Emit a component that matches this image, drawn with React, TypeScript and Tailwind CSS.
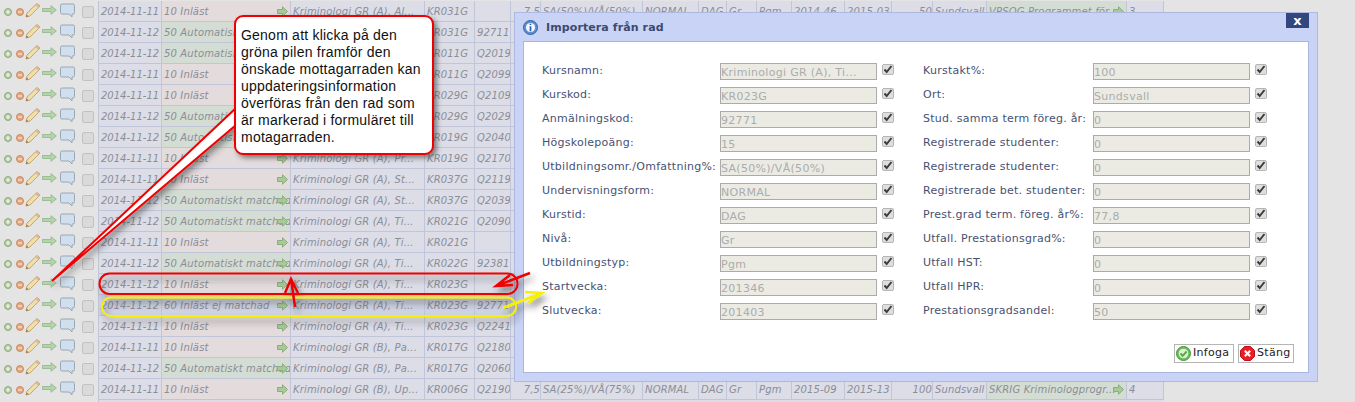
const rows = [
  ['2014-11-11', 'r', 'Kriminologi GR (A), Al...', 'KR031G', ''],
  ['2014-11-12', 'g', '', 'KR031G', '92711'],
  ['2014-11-12', 'g', '', 'KR011G', 'Q2019'],
  ['2014-11-11', 'r', '', 'KR011G', 'Q2099'],
  ['2014-11-11', 'r', '', 'KR029G', 'Q2109'],
  ['2014-11-12', 'g', '', 'KR029G', 'Q2029'],
  ['2014-11-12', 'g', '', 'KR019G', 'Q2040'],
  ['2014-11-11', 'r', 'Kriminologi GR (A), Pr...', 'KR019G', 'Q2170'],
  ['2014-11-11', 'r', 'Kriminologi GR (A), St...', 'KR037G', 'Q2119'],
  ['2014-11-12', 'g', 'Kriminologi GR (A), St...', 'KR037G', 'Q2039'],
  ['2014-11-12', 'g', 'Kriminologi GR (A), Ti...', 'KR021G', 'Q2090'],
  ['2014-11-11', 'r', 'Kriminologi GR (A), Ti...', 'KR021G', ''],
  ['2014-11-12', 'g', 'Kriminologi GR (A), Ti...', 'KR022G', '92381'],
  ['2014-11-12', 'r', 'Kriminologi GR (A), Ti...', 'KR023G', ''],
  ['2014-11-12', 'b', 'Kriminologi GR (A), Ti...', 'KR023G', '92771'],
  ['2014-11-11', 'r', 'Kriminologi GR (A), Ti...', 'KR023G', 'Q2241'],
  ['2014-11-11', 'r', 'Kriminologi GR (B), Pa...', 'KR017G', 'Q2180'],
  ['2014-11-12', 'g', 'Kriminologi GR (B), Pa...', 'KR017G', 'Q2060'],
  ['2014-11-11', 'r', 'Kriminologi GR (B), Up...', 'KR006G', 'Q2190'],
];

const leftFields = [
  ['Kursnamn:', 'Kriminologi GR (A), Ti...'],
  ['Kurskod:', 'KR023G'],
  ['Anmälningskod:', '92771'],
  ['Högskolepoäng:', '15'],
  ['Utbildningsomr./Omfattning%:', 'SA(50%)/VÅ(50%)'],
  ['Undervisningsform:', 'NORMAL'],
  ['Kurstid:', 'DAG'],
  ['Nivå:', 'Gr'],
  ['Utbildningstyp:', 'Pgm'],
  ['Startvecka:', '201346'],
  ['Slutvecka:', '201403'],
];

const rightFields = [
  ['Kurstakt%:', '100'],
  ['Ort:', 'Sundsvall'],
  ['Stud. samma term föreg. år:', '0'],
  ['Registrerade studenter:', '0'],
  ['Registrerade studenter:', '0'],
  ['Registrerade bet. studenter:', '0'],
  ['Prest.grad term. föreg. år%:', '77,8'],
  ['Utfall. Prestationsgrad%:', '0'],
  ['Utfall HST:', '0'],
  ['Utfall HPR:', '0'],
  ['Prestationsgradsandel:', '50'],
];

const gridCols = 'grid-cols-[63px_129px_134px_50px_36px_30px_102px_56px_28px_30px_35px_53px_47px_41px_54px_140px_37px]';

function RowIcons() {
  return (
    <div className="relative flex h-full w-[98px] shrink-0 items-center bg-[#e4e4e4] pl-[4px]">
      <svg width="8" height="8" viewBox="0 0 8 8" className="mr-[4px] shrink-0">
        <circle cx="4" cy="4" r="3.500" fill="#b4cba6" stroke="#8fab7f" />
        <path d="M2 4h4M4 2v4" stroke="#f2f6ee" strokeWidth="1.100" />
      </svg>
      <svg width="8" height="8" viewBox="0 0 8 8" className="mr-[1px] shrink-0">
        <circle cx="4" cy="4" r="3.500" fill="#e3a67e" stroke="#cd8d5f" />
        <path d="M2 4h4" stroke="#f8efe7" strokeWidth="1.100" />
      </svg>
      <svg width="16" height="16" viewBox="0 0 16 16" className="mb-[3px] shrink-0">
        <path d="M1 15l1-4L12 1.500l3 2.500L5 14z" fill="#efdfa8" stroke="#c4a478" />
        <path d="M11 2.500l3 2.600" stroke="#dcb49c" strokeWidth="2" />
        <path d="M1 15l.6-2.400 1.800 1.600z" fill="#8b7158" />
      </svg>
      <svg width="15" height="10" viewBox="0 0 15 10" className="mb-[3px] ml-[1px] shrink-0">
        <path d="M0.500 3.500h8.500V0.700L14.300 5 9 9.300V6.500H0.500z" fill="#b4d4aa" stroke="#9cbd96" />
      </svg>
      <svg width="15" height="15" viewBox="0 0 15 15" className="mb-[2px] ml-[3px] shrink-0">
        <path d="M2 1h11q1.500 0 1.500 1.500v7q0 1.500-1.500 1.500h-1v3l-3-3H2Q.5 11 .5 9.500v-7Q.5 1 2 1z" fill="#cfdfee" stroke="#9aa6b4" />
      </svg>
      <span className="ml-[7px] h-[12px] w-[12px] shrink-0 rounded-[2px] border border-[#c2c2c2] bg-[#dadada]" />
    </div>
  );
}

function CellArrow() {
  return (
    <svg width="11" height="11" viewBox="0 0 11 11" className="absolute right-[2px] top-[5px]">
      <path d="M.5 3.500h5V.8L10.500 5.500 5.500 10.200V7.500h-5z" fill="#a6cb96" stroke="#8cad80" />
    </svg>
  );
}

function Cell({ children, className = '' }: { children?: React.ReactNode; className?: string }) {
  return (
    <div className={`relative overflow-hidden whitespace-nowrap border-r border-[#c0c5da] pl-[2px] leading-[21px] ${className}`}>
      {children}
    </div>
  );
}

function TableRow({ row, index }: { row: string[]; index: number }) {
  const [date, state, name, code, anm] = row;
  const status = state === 'g' ? '50 Automatiskt matchad' : state === 'b' ? '60 Inläst ej matchad' : '10 Inläst';
  const statusBg = state === 'g' ? 'bg-[#d4ddd3]' : state === 'b' ? 'bg-[#cfd3e2]' : 'bg-[#e3dbdc]';
  const cellBg = state === 'b' ? 'bg-[#cfd3e2]' : 'bg-[#dcdde6]';
  const first = index === 0;
  const last = index === 18;
  const visible = first || last;
  return (
    <div className="flex h-[21px] w-[1164px]">
      <RowIcons />
      <div className={`grid flex-1 ${gridCols} border-b border-l border-[#c0c5da] text-[10px] italic tracking-[0.15px] text-[#8b8d99] ${cellBg}`}>
        <Cell className="tracking-normal">{date}</Cell>
        <Cell className={statusBg}>
          {status}
          <CellArrow />
        </Cell>
        <Cell>{name}</Cell>
        <Cell>{code}</Cell>
        <Cell>{anm}</Cell>
        <Cell className="text-right">{visible && '7,5'}</Cell>
        <Cell>{first ? 'SA(50%)/VÅ(50%)' : last ? 'SA(25%)/VÅ(75%)' : ''}</Cell>
        <Cell>{visible && 'NORMAL'}</Cell>
        <Cell>{visible && 'DAG'}</Cell>
        <Cell>{visible && 'Gr'}</Cell>
        <Cell>{visible && 'Pgm'}</Cell>
        <Cell>{first ? '2014-46' : last ? '2015-09' : ''}</Cell>
        <Cell>{first ? '2015-03' : last ? '2015-13' : ''}</Cell>
        <Cell className="text-right">{first ? '50' : last ? '100' : ''}</Cell>
        <Cell>{visible && 'Sundsvall'}</Cell>
        <Cell className="bg-[#d4ddd3]">
          {first ? 'VPSOG Programmet för' : last ? 'SKRIG Kriminologprogr...' : ''}
          <CellArrow />
        </Cell>
        <Cell>{first ? '3' : last ? '4' : ''}</Cell>
      </div>
    </div>
  );
}

function Field({ label, value, labelWidth }: { label: string; value: string; labelWidth: string }) {
  return (
    <div className="flex h-[24px] items-start">
      <label className={`${labelWidth} shrink-0 whitespace-nowrap text-[11px] leading-[15px] tracking-[0.25px] text-[#465172]`}>{label}</label>
      <div className="h-[17px] w-[157px] shrink-0 overflow-hidden whitespace-nowrap border border-[#ababab] bg-[#ebebe4] pt-[1px] text-[11px] leading-[15px] tracking-[0.3px] text-[#acacac]">
        {value}
      </div>
      <span className="ml-[5px] mt-[1px] flex h-[11px] w-[12px] items-center justify-center rounded-[2px] border border-[#b5b5b5] bg-[#dedede]">
        <svg width="10" height="9" viewBox="0 0 10 9">
          <path d="M1.500 4.500l2.200 2.500L8.500 1" fill="none" stroke="#3d3d3d" strokeWidth="2" />
        </svg>
      </span>
    </div>
  );
}

function Modal() {
  return (
    <div className="absolute left-[514px] top-[12px] flex h-[370px] w-[804px] flex-col border border-[#aeb9e2] bg-[#c9d3f5] px-[8px] pb-[8px] font-['DejaVu_Sans',sans-serif]">
      <div className="relative flex h-[28px] shrink-0 items-center">
        <svg width="15" height="15" viewBox="0 0 15 15">
          <circle cx="7.500" cy="7.500" r="7" fill="#5b8fd6" stroke="#3d5f9c" />
          <circle cx="7.500" cy="7.500" r="4.600" fill="#f4f7fd" />
          <path d="M7.500 3.800v1.200M7.500 6.200v5" stroke="#2f5da8" strokeWidth="1.700" />
        </svg>
        <span className="ml-[8px] text-[11px] font-bold leading-none tracking-[0.1px] text-[#3c4a70]">Importera från rad</span>
        <span className="absolute right-0 top-0 flex h-[15px] w-[23px] items-center justify-center bg-[#33477f] pb-[1px] text-[13px] font-bold leading-none text-white">x</span>
      </div>
      <div className="relative flex-1 border border-[#a9b5dd] bg-white pl-[18px] pt-[21px]">
        <div className="flex">
          <div className="w-[381px] shrink-0">
            {leftFields.map(f => <Field key={f[0]} label={f[0]} value={f[1]} labelWidth="w-[178px]" />)}
          </div>
          <div>
            {rightFields.map((f, i) => <Field key={i} label={f[0]} value={f[1]} labelWidth="w-[170px]" />)}
          </div>
        </div>
        <div className="absolute bottom-[9px] right-[14px] flex gap-[4px] text-[11px] tracking-[0.3px] text-[#222]">
          <button className="flex h-[19px] w-[60px] items-center gap-[2px] border border-[#b5b5b5] bg-white pl-[1px]">
            <svg width="15" height="15" viewBox="0 0 15 15">
              <circle cx="7.500" cy="7.500" r="7" fill="#6cbc5a" stroke="#46953a" />
              <circle cx="7.500" cy="7.500" r="4.800" fill="#dff0d9" />
              <path d="M4.500 7.500l2.200 2.300 3.900-4.300" fill="none" stroke="#59aa4a" strokeWidth="2" />
            </svg>
            Infoga
          </button>
          <button className="flex h-[19px] w-[56px] items-center gap-[2px] border border-[#b5b5b5] bg-white pl-[1px]">
            <svg width="15" height="15" viewBox="0 0 15 15">
              <path d="M4.500.5h6l4 4v6l-4 4h-6l-4-4v-6z" fill="#ee1c25" stroke="#b8141b" />
              <path d="M4.800 4.800l5.400 5.400M10.200 4.800l-5.400 5.400" stroke="#fff" strokeWidth="2.200" />
            </svg>
            Stäng
          </button>
        </div>
      </div>
    </div>
  );
}

function Callout() {
  return (
    <div className="absolute left-[234px] top-[15px] h-[140px] w-[200px] rounded-[9px] border-[2px] border-[#f00000] bg-white pl-[5px] pt-[10px] font-['Liberation_Sans',sans-serif] text-[14px] leading-[17px] tracking-[0.22px] text-[#111] shadow-[3px_3px_5px_rgba(60,60,60,0.6)]">
      Genom att klicka på den<br />
      gröna pilen framför den<br />
      önskade mottagarraden kan<br />
      uppdateringsinformation<br />
      överföras från den rad som<br />
      är markerad i formuläret till<br />
      motagarraden.
    </div>
  );
}

// pekare och markeringar ritade ovanpå tabellen
function Annotations() {
  return (
    <svg width="1355" height="402" className="pointer-events-none absolute left-0 top-0">
      <defs>
        <filter id="shade" x="-20%" y="-20%" width="140%" height="160%">
          <feDropShadow dx="3" dy="5" stdDeviation="3" floodColor="#333" floodOpacity="0.55" />
        </filter>
      </defs>
      <g filter="url(#shade)" fill="none">
        <rect x="99.500" y="273.500" width="418" height="20.500" rx="10" stroke="#f00000" strokeWidth="2" />
        <rect x="102" y="297.500" width="414" height="18.500" rx="9" stroke="#f7f000" strokeWidth="2" />
        <path d="M530 273L496 286M510 275L496 286L513 285" stroke="#f00000" strokeWidth="2.500" />
        <path d="M503 308L542 293M525 292L542 293L528 303" stroke="#f7f000" strokeWidth="2.500" />
        <path d="M295 307L291 279M285 293L291 279L298 293" stroke="#f00000" strokeWidth="2.500" />
      </g>
    </svg>
  );
}

function Pointer() {
  return (
    <svg width="1355" height="402" className="pointer-events-none absolute left-0 top-0">
      <defs>
        <filter id="shade2" x="-20%" y="-20%" width="140%" height="140%">
          <feDropShadow dx="3" dy="4" stdDeviation="3" floodColor="#333" floodOpacity="0.5" />
        </filter>
      </defs>
      <path d="M236 108L52 281L236 125" fill="#fff" stroke="#f00000" strokeWidth="2" filter="url(#shade2)" />
    </svg>
  );
}

export default function App() {
  return (
    <div className="relative h-[402px] w-[1355px] overflow-hidden bg-[#e4e4e4] font-['DejaVu_Sans',sans-serif]">
      <div className="flex flex-col pt-[1px]">
        {rows.map((row, i) => <TableRow key={i} row={row} index={i} />)}
        <div className="h-[21px] w-[1164px] pl-[98px]">
          <div className="h-full border-l border-[#c0c5da] bg-[#dcdde6]" />
        </div>
      </div>
      <Pointer />
      <Modal />
      <Annotations />
      <Callout />
    </div>
  );
}
